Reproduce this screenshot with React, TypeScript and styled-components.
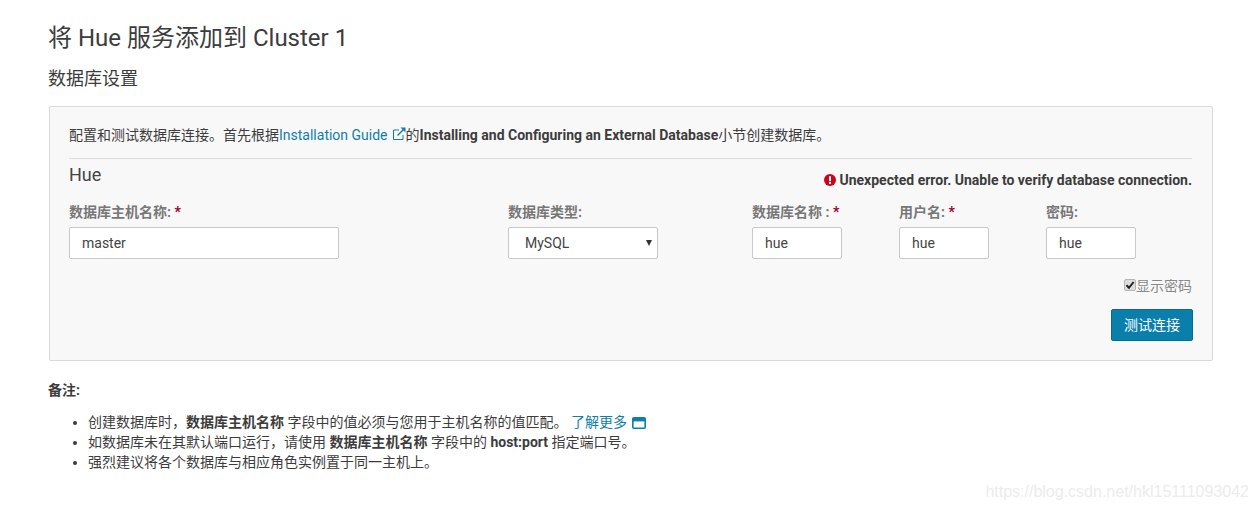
// App.tsx
import styled, { createGlobalStyle } from 'styled-components';

const GlobalStyle = createGlobalStyle`
  html, body {
    margin: 0;
    padding: 0;
    background: #fff;
  }
  body {
    font-family: Roboto, "Noto Sans CJK SC", sans-serif;
    font-size: 14px;
    color: #3c3c3c;
  }
  * {
    box-sizing: border-box;
  }
`;

const Page = styled.div`
  position: relative;
  width: 1258px;
  height: 510px;
  overflow: hidden;
  padding: 23px 45px 0 49px;
`;

const Title = styled.h1`
  margin: 0 0 0 -1px;
  font-size: 24px;
  line-height: 30px;
  font-weight: 400;
  color: #3c3c3c;
`;

const Subtitle = styled.h2`
  margin: 13px 0 0 -1px;
  font-size: 18px;
  line-height: 26px;
  font-weight: 400;
  color: #3c3c3c;
`;

const Panel = styled.div`
  margin-top: 14px;
  height: 255px;
  padding: 19px 20px 0 19px;
  background: #f8f8f8;
  border: 1px solid #d9d9d9;
  border-radius: 2px;
`;

const Intro = styled.p`
  margin: 0;
  line-height: 18px;
  padding-bottom: 14px;
  border-bottom: 1px solid #ddd;
`;

const Link = styled.a`
  color: #0f7fa9;
  text-decoration: none;
`;

const ExternalIcon = styled.svg`
  width: 14px;
  height: 14px;
  margin-left: 4px;
  vertical-align: -1px;
`;

const HeaderRow = styled.div`
  display: flex;
  justify-content: space-between;
  align-items: flex-start;
  height: 44px;
`;

const ServiceName = styled.h3`
  margin: 5px 0 0;
  font-size: 18px;
  line-height: 22px;
  font-weight: 400;
  color: #444;
`;

const ErrorText = styled.div`
  display: flex;
  align-items: center;
  gap: 3px;
  margin-top: 12px;
  font-weight: 700;
  line-height: 18px;
  color: #3c3c3c;
`;

const ErrorIcon = styled.svg`
  width: 12px;
  height: 12px;
`;

const FieldGrid = styled.div`
  display: grid;
  grid-template-columns: 439px 244px 147px 147px 1fr;
`;

const Label = styled.label`
  display: block;
  font-weight: 700;
  line-height: 18px;
  color: #777;
  margin-bottom: 6px;
`;

const Required = styled.span`
  color: #a1002e;
`;

const Input = styled.input<{ $width: number }>`
  display: block;
  width: ${(p) => p.$width}px;
  height: 32px;
  padding: 0 12px;
  font-family: Roboto, sans-serif;
  font-size: 14px;
  color: #444;
  background: #fff;
  border: 1px solid #c8c8c8;
  border-radius: 2px;
  outline: none;
`;

const SelectWrap = styled.div`
  position: relative;
  width: 150px;

  &::after {
    content: '';
    position: absolute;
    right: 6px;
    top: 13px;
    border-left: 3.5px solid transparent;
    border-right: 3.5px solid transparent;
    border-top: 6px solid #333;
    pointer-events: none;
  }
`;

const Select = styled.select`
  display: block;
  width: 100%;
  height: 32px;
  padding: 0 16px;
  appearance: none;
  font-family: Roboto, sans-serif;
  font-size: 14px;
  color: #444;
  background: #fff;
  border: 1px solid #c8c8c8;
  border-radius: 2px;
  outline: none;
`;

const CheckRow = styled.div`
  display: flex;
  justify-content: flex-end;
  align-items: center;
  margin-top: 18px;
  height: 18px;
  color: #888;
  line-height: 18px;
`;

const CheckBox = styled.span`
  display: flex;
  align-items: center;
  justify-content: center;
  width: 12px;
  height: 12px;
  margin-top: -3px;
  background: #ddd;
  border: 1px solid #b5b5b5;
  border-radius: 2px;
`;

const CheckMark = styled.svg`
  width: 10px;
  height: 10px;
`;

const ActionRow = styled.div`
  display: flex;
  justify-content: flex-end;
  margin: 14px -1px 0 0;
`;

const Button = styled.button`
  width: 82px;
  height: 32px;
  padding: 0 0 2px;
  font-family: Roboto, "Noto Sans CJK SC", sans-serif;
  font-size: 14px;
  color: #fff;
  background: #0a7fab;
  border: 1px solid #086a8f;
  border-radius: 2px;
`;

const NotesTitle = styled.p`
  margin: 20px 0 0 -1px;
  font-weight: 700;
  line-height: 18px;
  color: #3c3c3c;
`;

const Notes = styled.ul`
  margin: 13px 0 0;
  padding: 0 0 0 39px;
  line-height: 20px;
`;

const NewWindowIcon = styled.svg`
  width: 14px;
  height: 14px;
  margin-left: 5px;
  vertical-align: -3px;
`;

const Watermark = styled.div`
  position: absolute;
  right: 9px;
  top: 482px;
  font-size: 16px;
  line-height: 20px;
  color: #ececec;
  font-family: "Liberation Sans", sans-serif;
`;

export default function App() {
  return (
    <Page>
      <GlobalStyle />
      <Title>将 Hue 服务添加到 Cluster 1</Title>
      <Subtitle>数据库设置</Subtitle>
      <Panel>
        <Intro>
          配置和测试数据库连接。首先根据
          <Link href="#">
            Installation Guide
            <ExternalIcon viewBox="0 0 14 14" fill="none" stroke="#0f7fa9">
              <path d="M11 8v4.5H1.5V3H7" />
              <path d="M5.5 8.5 12 2" strokeWidth="1.4" />
              <path d="M8.5 0.5h5v5z" fill="#0f7fa9" stroke="none" />
            </ExternalIcon>
          </Link>
          的<b>Installing and Configuring an External Database</b>小节创建数据库。
        </Intro>
        <HeaderRow>
          <ServiceName>Hue</ServiceName>
          <ErrorText>
            <ErrorIcon viewBox="0 0 12 12">
              <circle cx="6" cy="6" r="6" fill="#d0021b" />
              <rect x="5" y="2.2" width="2" height="5" fill="#fff" />
              <rect x="5" y="8" width="2" height="2" fill="#fff" />
            </ErrorIcon>
            Unexpected error. Unable to verify database connection.
          </ErrorText>
        </HeaderRow>
        <FieldGrid>
          <div>
            <Label>数据库主机名称: <Required>*</Required></Label>
            <Input $width={270} defaultValue="master" />
          </div>
          <div>
            <Label>数据库类型:</Label>
            <SelectWrap>
              <Select defaultValue="MySQL">
                <option>MySQL</option>
              </Select>
            </SelectWrap>
          </div>
          <div>
            <Label>数据库名称 : <Required>*</Required></Label>
            <Input $width={90} defaultValue="hue" />
          </div>
          <div>
            <Label>用户名: <Required>*</Required></Label>
            <Input $width={90} defaultValue="hue" />
          </div>
          <div>
            <Label>密码:</Label>
            <Input $width={90} defaultValue="hue" />
          </div>
        </FieldGrid>
        <CheckRow>
          <CheckBox>
            <CheckMark viewBox="0 0 10 10">
              <path d="M1.5 5.2 4 7.8 8.6 2" fill="none" stroke="#222" strokeWidth="2" />
            </CheckMark>
          </CheckBox>
          显示密码
        </CheckRow>
        <ActionRow>
          <Button>测试连接</Button>
        </ActionRow>
      </Panel>
      <NotesTitle>备注:</NotesTitle>
      <Notes>
        <li>
          创建数据库时，<b>数据库主机名称</b> 字段中的值必须与您用于主机名称的值匹配。 <Link href="#">了解更多</Link>
          <NewWindowIcon viewBox="0 0 14 14">
            <rect x="0.8" y="1.8" width="12.4" height="10.4" rx="1" fill="#fff" stroke="#0f7fa9" strokeWidth="1.6" />
            <rect x="1" y="2" width="12" height="3.4" fill="#0f7fa9" />
          </NewWindowIcon>
        </li>
        <li>
          如数据库未在其默认端口运行，请使用 <b>数据库主机名称</b> 字段中的 <b>host:port</b> 指定端口号。
        </li>
        <li>强烈建议将各个数据库与相应角色实例置于同一主机上。</li>
      </Notes>
      <Watermark>https://blog.csdn.net/hkl15111093042</Watermark>
    </Page>
  );
}
